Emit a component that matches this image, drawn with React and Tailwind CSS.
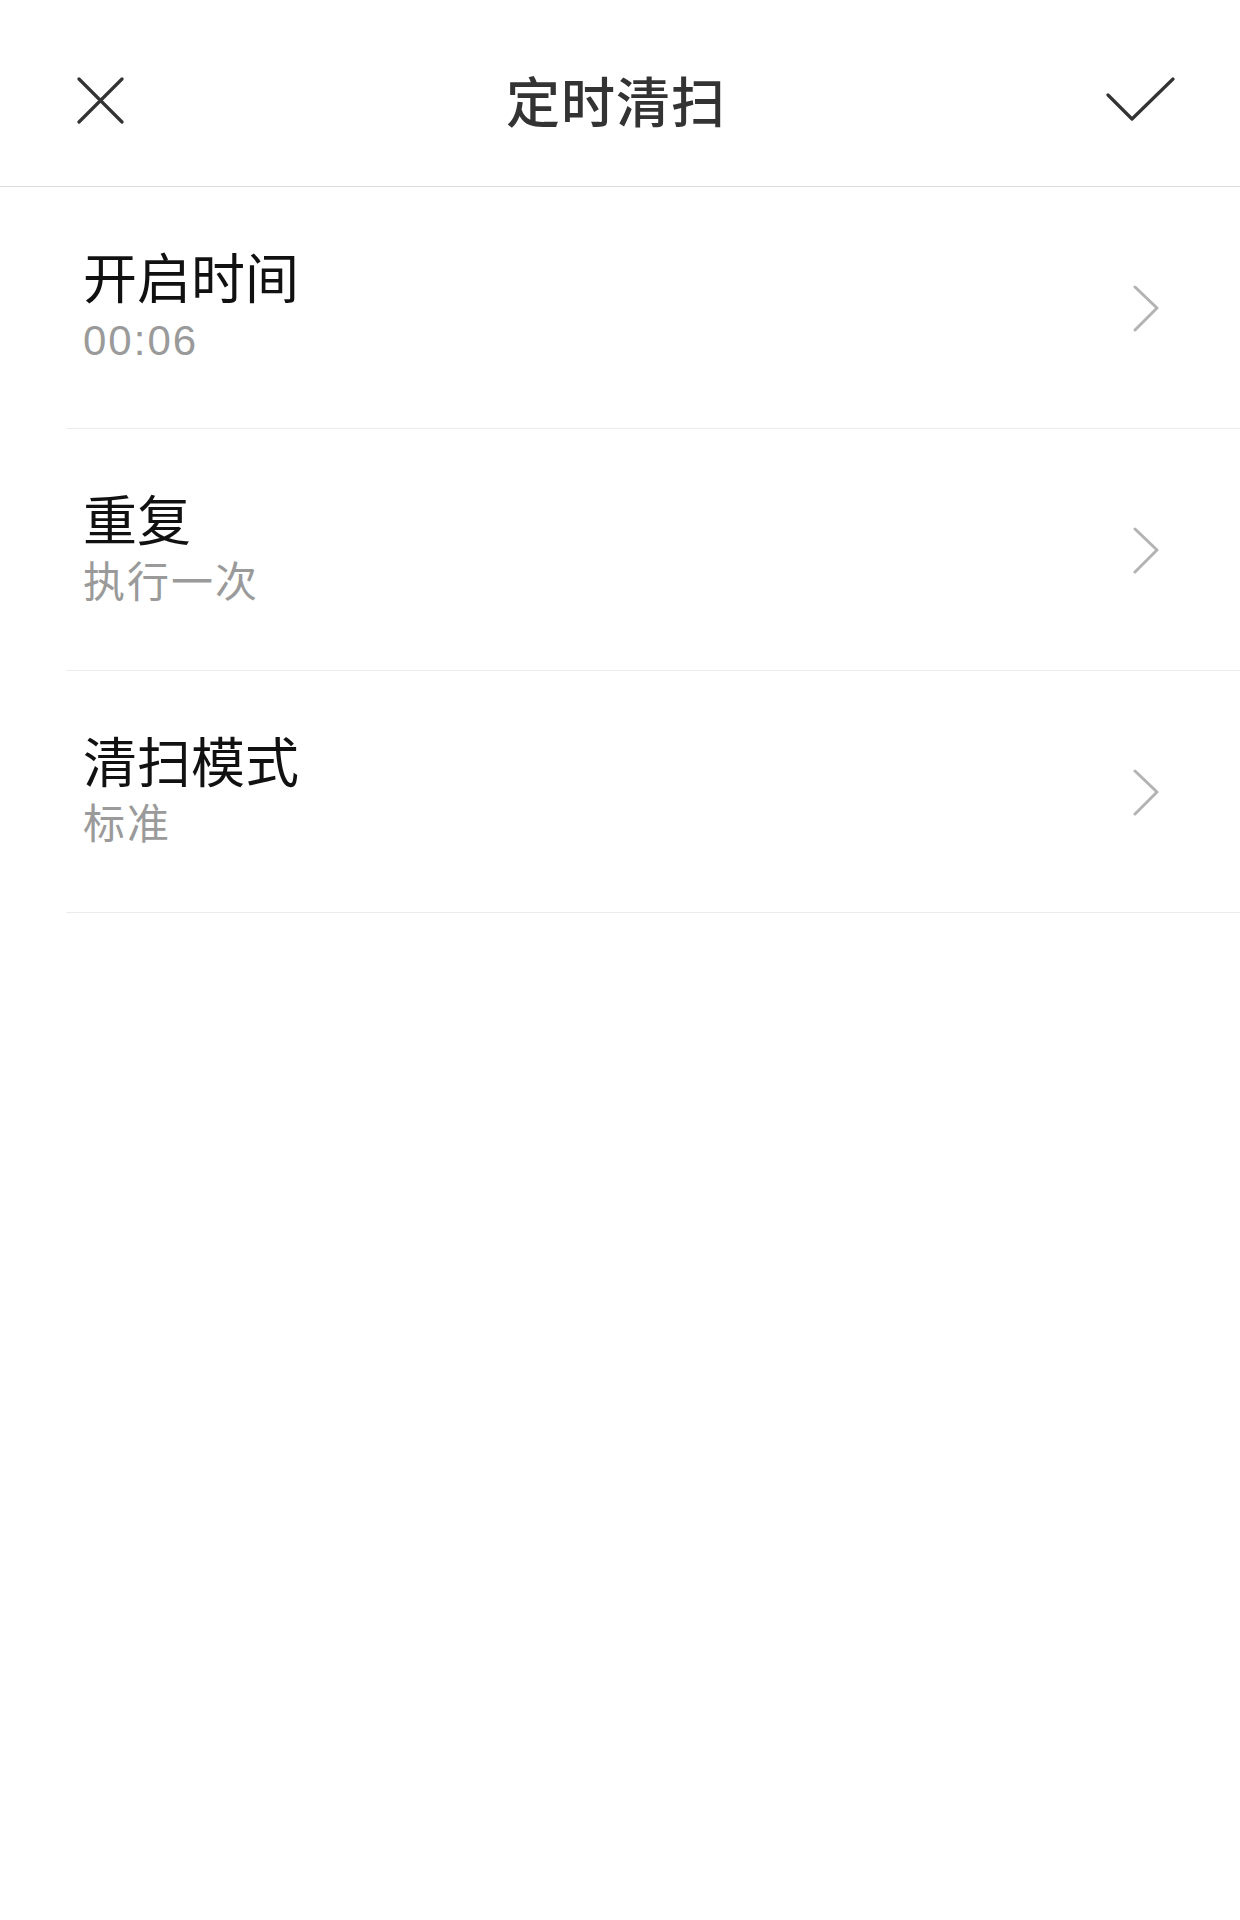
const font = { fontFamily: '"Noto Sans CJK SC", "Noto Sans", sans-serif' };
const valueFont = { fontFamily: '"Liberation Sans", "Noto Sans CJK SC", sans-serif' };

const rows = [
  { title: '开启时间', value: '00:06' },
  { title: '重复', value: '执行一次' },
  { title: '清扫模式', value: '标准' },
];

function Chevron() {
  return (
    <svg width="30" height="48" viewBox="0 0 30 48" fill="none">
      <polyline
        points="5,3 27,24 5,46"
        stroke="#b3b3b3"
        strokeWidth="3"
        strokeLinecap="round"
        strokeLinejoin="round"
      />
    </svg>
  );
}

export default function App() {
  return (
    <div className="min-h-[1920px] w-full bg-white" style={font}>
      <header className="flex h-[187px] items-center justify-between border-b border-[#dcdcdc] pl-[74px] pr-[64px] pt-[14px]">
        <button type="button" aria-label="Close" className="flex h-[48px] w-[52px] items-center justify-center">
          <svg width="48" height="48" viewBox="0 0 48 48" fill="none">
            <path d="M3 3 L46 46 M46 3 L3 46" stroke="#333333" strokeWidth="3.2" strokeLinecap="round" />
          </svg>
        </button>
        <h1 className="text-[54px] font-medium leading-none tracking-[1px] text-[#333333]">定时清扫</h1>
        <button type="button" aria-label="Save" className="flex h-[48px] w-[70px] items-center justify-center">
          <svg width="70" height="46" viewBox="0 0 70 46" fill="none">
            <polyline
              points="2,18 26,42 67,2"
              stroke="#333333"
              strokeWidth="3.2"
              strokeLinecap="round"
              strokeLinejoin="round"
            />
          </svg>
        </button>
      </header>

      <ul className="ml-[66px]">
        {rows.map((row) => (
          <li
            key={row.title}
            className="flex h-[242px] items-center justify-between border-b border-[#ececec] pl-[17px] pr-[80px]"
          >
            <div className="flex flex-col pb-[5px]">
              <span className="text-[54px] leading-[60px] text-[#111111]">{row.title}</span>
              <span className="mt-[12px] text-[42px] leading-[46px] tracking-[2px] text-[#9a9a9a]" style={valueFont}>
                {row.value}
              </span>
            </div>
            <Chevron />
          </li>
        ))}
      </ul>
    </div>
  );
}
